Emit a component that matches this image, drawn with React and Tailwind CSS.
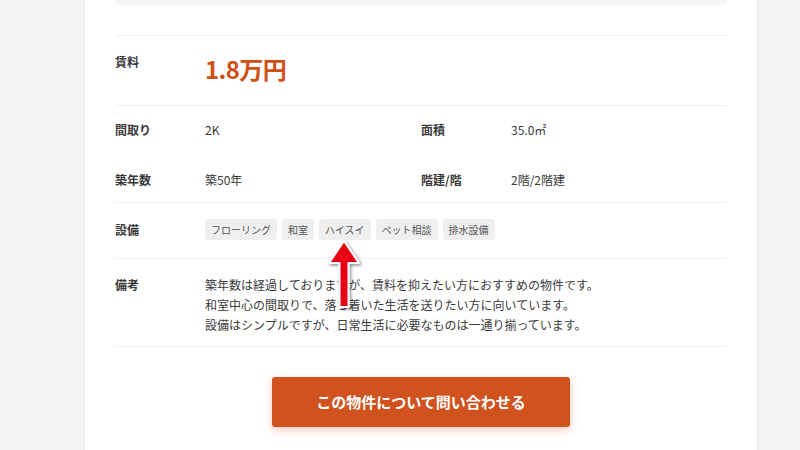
import React from 'react';

const tags = ['フローリング', '和室', 'ハイスイ', 'ペット相談', '排水設備'];

const Label = ({ children }) => (
    <div className="w-[90px] shrink-0 text-[12px] leading-5 font-bold text-[#3a3a3a]">{children}</div>
);

const Value = ({ children }) => (
    <div className="text-[12px] leading-5 text-[#3a3a3a]">{children}</div>
);

export default function App() {
    return (
        <div className="h-[450px] overflow-hidden bg-[#f3f3f3] font-['Noto_Sans_CJK_JP','Noto_Sans',sans-serif]">
            <div className="relative ml-[85px] w-[672px] h-[450px] bg-white px-[30px] shadow-[0_0_3px_rgba(0,0,0,0.08)]">
                {/* bottom of the block above */}
                <div className="h-[5px] bg-[#f7f7f7] rounded-b" />

                <div className="mt-[30px] border-t border-[#f0f0f0]">
                    {/* rent */}
                    <div className="flex items-start pt-4 pb-[20px] border-b border-[#f0f0f0]">
                        <Label>賃料</Label>
                        <div className="mt-[1px] text-[24px] leading-8 font-bold text-[#cf4f17] tracking-tight">1.8万円</div>
                    </div>

                    {/* basic info */}
                    <div className="border-b border-[#f0f0f0]">
                        <div className="grid grid-cols-2 pt-[14px] pb-[15px]">
                            <div className="flex">
                                <Label>間取り</Label>
                                <Value>2K</Value>
                            </div>
                            <div className="flex">
                                <Label>面積</Label>
                                <Value>35.0㎡</Value>
                            </div>
                        </div>
                        <div className="grid grid-cols-2 pt-[15px] pb-[12px]">
                            <div className="flex">
                                <Label>築年数</Label>
                                <Value>築50年</Value>
                            </div>
                            <div className="flex">
                                <Label>階建/階</Label>
                                <Value>2階/2階建</Value>
                            </div>
                        </div>
                    </div>

                    {/* equipment */}
                    <div className="flex items-center pt-[16px] pb-[18px] border-b border-[#f0f0f0]">
                        <Label>設備</Label>
                        <div className="flex gap-[5px]">
                            {tags.map(t => (
                                <span key={t} className="h-[21px] px-[6px] flex items-center rounded-[3px] bg-[#efefef] text-[10px] text-[#555]">
                                    {t}
                                </span>
                            ))}
                        </div>
                    </div>

                    {/* remarks */}
                    <div className="flex items-start pt-[16px] pb-[11px] border-b border-[#f0f0f0]">
                        <Label>備考</Label>
                        <p className="text-[12px] leading-5 text-[#3a3a3a]">
                            築年数は経過しておりますが、賃料を抑えたい方におすすめの物件です。<br />
                            和室中心の間取りで、落ち着いた生活を送りたい方に向いています。<br />
                            設備はシンプルですが、日常生活に必要なものは一通り揃っています。
                        </p>
                    </div>
                </div>

                <div className="flex justify-center pt-[30px]">
                    <button className="w-[298px] h-[50px] rounded-[3px] bg-[#d0531f] text-white text-[15px] font-bold shadow-[0_3px_8px_rgba(208,83,31,0.3)]">
                        この物件について問い合わせる
                    </button>
                </div>

                {/* annotation arrow */}
                <svg className="absolute left-[239px] top-[237px] pointer-events-none" width="44" height="76" viewBox="0 0 44 76">
                    <defs>
                        <filter id="sh" x="-50%" y="-50%" width="200%" height="200%">
                            <feDropShadow dx="1.5" dy="1.5" stdDeviation="1.5" floodColor="#000" floodOpacity="0.45" />
                        </filter>
                    </defs>
                    <path
                        d="M20 4 L35 26 L24.5 26 L24.5 70 L15.5 70 L15.5 26 L5 26 Z"
                        fill="#e60012"
                        stroke="#fff"
                        strokeWidth="2"
                        strokeLinejoin="round"
                        filter="url(#sh)"
                    />
                </svg>
            </div>
        </div>
    );
}
